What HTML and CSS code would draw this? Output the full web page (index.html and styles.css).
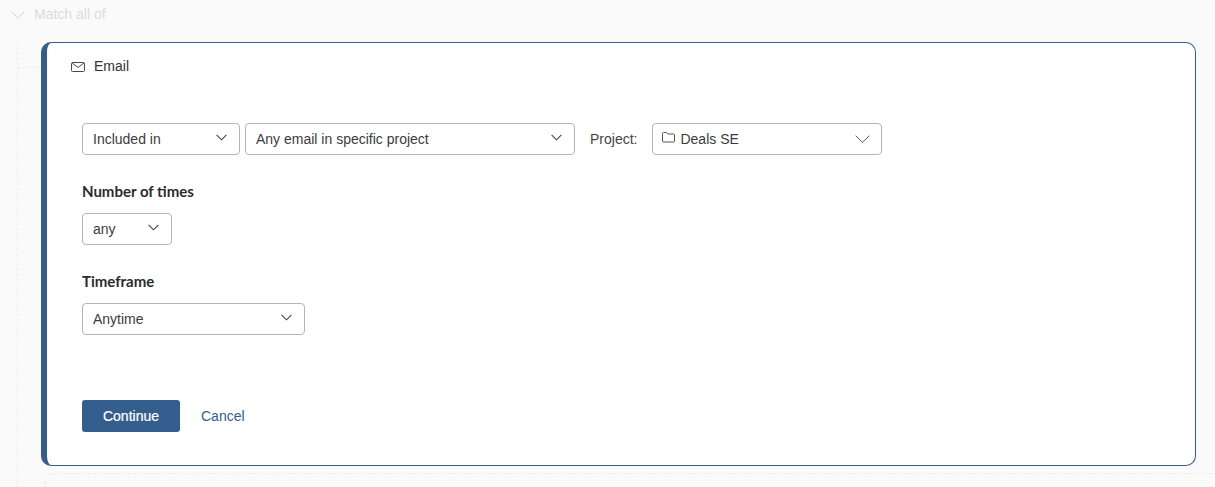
FILE: index.html
```html
<!DOCTYPE html>
<html lang="en">
<head>
<meta charset="utf-8">
<title>Email filter</title>
<link rel="stylesheet" href="styles.css">
</head>
<body>
<div class="page">
  <div class="group-head">
    <svg class="group-chevron" width="14" height="8" viewBox="0 0 14 8"><path d="M.5.5 7 7.200 13.500.5" fill="none" stroke="#d4d4d4" stroke-width="1"/></svg>
    <span class="group-label">Match all of</span>
  </div>
  <div class="group-body">
    <div class="rail"></div>
    <div class="rail-branch"></div>
    <section class="card">
      <header class="card-head">
        <svg width="14" height="10" viewBox="0 0 14 10"><rect x=".5" y=".5" width="13" height="9" rx="1" fill="none" stroke="#4a4a4a"/><path d="M1 1l6 4.500L13 1" fill="none" stroke="#4a4a4a"/></svg>
        <span class="card-title">Email</span>
      </header>
      <div class="row">
        <div class="select w-included"><span>Included in</span><svg class="chev" width="11" height="7" viewBox="0 0 11 7"><path d="M.6.8 5.500 5.800 10.400.8" fill="none" stroke="#444" stroke-width="1.100"/></svg></div>
        <div class="select w-any"><span>Any email in specific project</span><svg class="chev" width="11" height="7" viewBox="0 0 11 7"><path d="M.6.8 5.500 5.800 10.400.8" fill="none" stroke="#444" stroke-width="1.100"/></svg></div>
        <span class="project-label">Project:</span>
        <div class="select w-project">
          <span class="with-icon"><svg width="13" height="11" viewBox="0 0 13 11"><path d="M.5 9V1.500a1 1 0 0 1 1-1h3l1.500 1.500h5.500a1 1 0 0 1 1 1V9a1 1 0 0 1-1 1h-10a1 1 0 0 1-1-1z" fill="none" stroke="#555"/></svg>Deals SE</span>
          <svg class="chev-big" width="15" height="8" viewBox="0 0 15 8"><path d="M.7.7 7.500 7.300 14.300.7" fill="none" stroke="#555" stroke-width="1"/></svg>
        </div>
      </div>
      <h3 class="field-title first">Number of times</h3>
      <div class="select w-times"><span>any</span><svg class="chev" width="11" height="7" viewBox="0 0 11 7"><path d="M.6.8 5.500 5.800 10.400.8" fill="none" stroke="#444" stroke-width="1.100"/></svg></div>
      <h3 class="field-title second">Timeframe</h3>
      <div class="select w-time"><span>Anytime</span><svg class="chev" width="11" height="7" viewBox="0 0 11 7"><path d="M.6.8 5.500 5.800 10.400.8" fill="none" stroke="#444" stroke-width="1.100"/></svg></div>
      <div class="actions">
        <button class="primary" type="button">Continue</button>
        <a class="cancel" href="#">Cancel</a>
      </div>
    </section>
    <div class="next-slot"></div>
  </div>
</div>
</body>
</html>
```
FILE: styles.css
```css
* { box-sizing: border-box; }
html, body { margin: 0; height: 100%; overflow: hidden; }
body { background: #fafafa; font-family: "Liberation Sans", Arial, sans-serif; font-size: 14px; color: #333; }
.page { height: 487px; overflow: hidden; }
.group-head { height: 42px; padding: 11px 0 0 11px; display: flex; align-items: flex-start; }
.group-chevron { margin-right: 9px; flex: none; }
.group-label { color: #dcdcdc; font-size: 14px; line-height: 6px; }
.group-body { position: relative; height: 445px; padding-left: 41px; padding-right: 19px; }
.rail { position: absolute; left: 17px; top: 0; bottom: 0; border-left: 1px dashed #ececec; }
.rail-branch { position: absolute; left: 17px; top: 25px; width: 24px; height: 1px; border-top: 1px dashed #ececec; }
.card { height: 424px; background: #fff; border: 1px solid #335e8d; border-left-width: 6px; border-radius: 10px; padding: 0 0 0 35px; }
.card-head { display: flex; align-items: center; gap: 9px; height: 47px; margin-left: -11px; font-size: 14px; color: #333; }
.card-head svg { flex: none; }
.card-title { margin-top: -2px; }
.row { display: flex; align-items: center; margin-top: 33px; }
.select { height: 32px; background: #fff; border: 1px solid #b5b5b5; border-radius: 4px; display: flex; align-items: center; justify-content: space-between; padding: 0 10px; color: #3c3c3c; font-size: 14px; }
.chev { margin-top: -3px; margin-right: 2px; }
.chev-big { margin-right: 1px; }
.w-included { width: 158px; margin-right: 5px; }
.w-any { width: 330px; }
.w-project { width: 230px; padding-right: 10px; }
.w-times { width: 90px; }
.w-time { width: 223px; }
.project-label { margin: 0 15px; color: #444; }
.with-icon { display: flex; align-items: center; gap: 5px; margin-left: -1px; }
.with-icon svg { margin-top: -3px; }
.field-title { margin: 0; font-family: Lato, sans-serif; font-weight: 700; font-size: 15px; line-height: 18px; color: #2b2b2b; }
.field-title.first { margin-top: 27px; margin-bottom: 13px; }
.field-title.second { margin-top: 27px; margin-bottom: 13px; }
.actions { display: flex; align-items: center; gap: 21px; margin-top: 65px; }
.primary { width: 98px; height: 32px; border: 0; border-radius: 3px; background: #335e8d; color: #fff; font: 400 14px "Liberation Sans", Arial, sans-serif; padding: 0; -webkit-text-stroke: .2px #fff; }
.cancel { color: #335e8d; text-decoration: none; font-size: 14px; }
.next-slot { position: absolute; left: 45px; right: 0; top: 431px; height: 20px; border: 1px dashed #ececec; border-right: 0; border-bottom: 0; border-radius: 8px 0 0 0; }
```
